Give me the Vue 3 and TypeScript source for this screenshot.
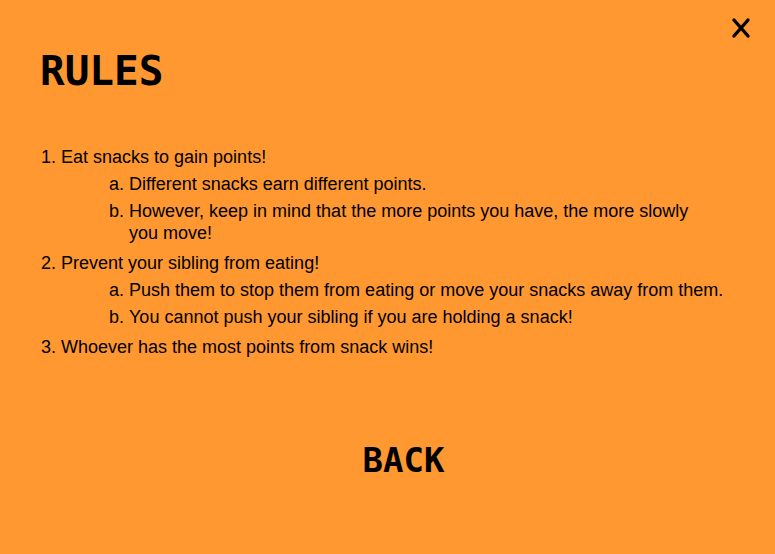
<script setup lang="ts">
interface Detail {
  marker: string
  text: string
}

interface Rule {
  marker: string
  text: string
  details: Detail[]
}

const rules: Rule[] = [
  {
    marker: '1.',
    text: 'Eat snacks to gain points!',
    details: [
      { marker: 'a.', text: 'Different snacks earn different points.' },
      {
        marker: 'b.',
        text: 'However, keep in mind that the more points you have, the more slowly\nyou move!',
      },
    ],
  },
  {
    marker: '2.',
    text: 'Prevent your sibling from eating!',
    details: [
      { marker: 'a.', text: 'Push them to stop them from eating or move your snacks away from them.' },
      { marker: 'b.', text: 'You cannot push your sibling if you are holding a snack!' },
    ],
  },
  { marker: '3.', text: 'Whoever has the most points from snack wins!', details: [] },
]
</script>

<template>
  <main class="screen">
    <header class="top">
      <h1 class="title">RULES</h1>
      <button class="close" type="button" aria-label="Close">
        <svg width="20" height="24" viewBox="0 0 20 24" aria-hidden="true">
          <path d="M3 4L17 20M17 4L3 20" fill="none" stroke="#000" stroke-width="3.4" stroke-linecap="round" />
        </svg>
      </button>
    </header>

    <ol class="rules">
      <li v-for="rule in rules" :key="rule.marker">
        <div class="line">
          <span class="marker">{{ rule.marker }}</span>
          <span class="text">{{ rule.text }}</span>
        </div>
        <ol v-if="rule.details.length" class="details">
          <li v-for="detail in rule.details" :key="detail.marker" class="line">
            <span class="marker">{{ detail.marker }}</span>
            <span class="text">{{ detail.text }}</span>
          </li>
        </ol>
      </li>
    </ol>

    <button class="back" type="button">BACK</button>
  </main>
</template>

<style>
body {
  background: #ff9830;
}
</style>

<style scoped>
.screen {
  box-sizing: border-box;
  min-height: 100vh;
  display: flex;
  flex-direction: column;
  padding: 16px 24px 72px 40px;
  background: #ff9830;
  color: #000;
  font-family: "Liberation Sans", Arial, sans-serif;
}

.top {
  display: flex;
  justify-content: space-between;
  align-items: flex-start;
}

.title {
  margin: 29px 0 0;
  font: 700 41px/52px "DejaVu Sans Mono", monospace;
}

button {
  padding: 0;
  border: 0;
  background: none;
  color: inherit;
  cursor: pointer;
}

.close {
  display: flex;
}

ol {
  margin: 0;
  padding: 0;
  list-style: none;
}

.rules {
  display: flex;
  flex-direction: column;
  gap: 8px;
  margin: 49px -16px 0 1px;
  font-size: 18px;
  line-height: 22px;
}

.details {
  display: flex;
  flex-direction: column;
  gap: 5px;
  margin-top: 5px;
  padding-left: 68px;
}

.line {
  display: flex;
  gap: 5px;
}

.text {
  white-space: pre-line;
}

.back {
  align-self: center;
  margin-top: auto;
  margin-left: 16px;
  font: 700 34px/44px "DejaVu Sans Mono", monospace;
}
</style>
